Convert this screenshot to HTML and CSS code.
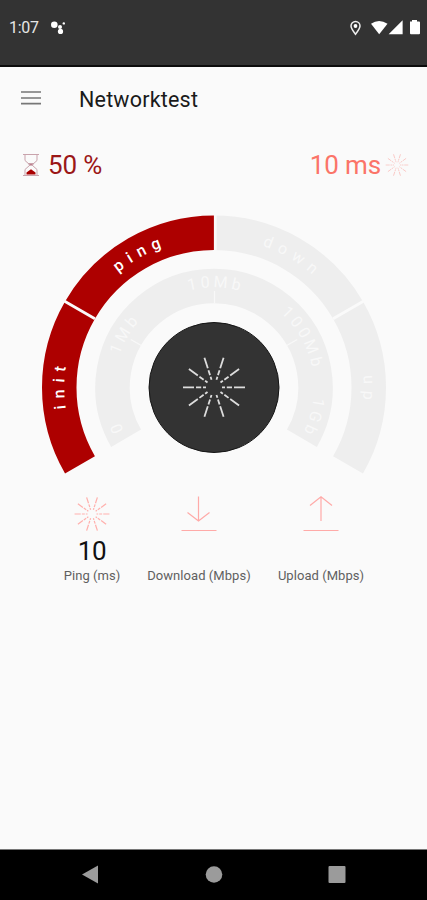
FILE: index.html
```
<!DOCTYPE html>
<html lang="en">
<head>
<meta charset="utf-8">
<title>Networktest</title>
<link rel="stylesheet" href="styles.css">
</head>
<body>
<svg class="defs" aria-hidden="true">
  <defs>
    <g id="ray"><path d="M8 0h3M12.8 0h5.2M20 0h11"/></g>
    <g id="burst">
      <use href="#ray"/>
      <use href="#ray" transform="rotate(36)"/>
      <use href="#ray" transform="rotate(72)"/>
      <use href="#ray" transform="rotate(108)"/>
      <use href="#ray" transform="rotate(144)"/>
      <use href="#ray" transform="rotate(180)"/>
      <use href="#ray" transform="rotate(216)"/>
      <use href="#ray" transform="rotate(252)"/>
      <use href="#ray" transform="rotate(288)"/>
      <use href="#ray" transform="rotate(324)"/>
    </g>
  </defs>
</svg>
<div class="screen">
  <header class="status">
    <span class="clock">1:07</span>
    <svg class="assist" width="16" height="16" viewBox="0 0 16 16"><circle cx="4.3" cy="4.7" r="3.3"/><circle cx="10" cy="7" r="2"/><circle cx="10.5" cy="11.400" r="2.6"/><circle cx="13.8" cy="3.4" r="1.2"/></svg>
    <svg class="signals" width="72" height="18" viewBox="0 0 72 18">
      <path class="pin" d="M7.5 16.2C5 13 3 10.400 3 8a4.500 4.500 0 0 1 9 0c0 2.400-2 5-4.500 8.200z"/><circle cx="7.500" cy="8" r="1.900"/>
      <path d="M23 5.800q8-5.600 16.500 0L31.200 16.200z"/>
      <path d="M54.600 2.200V16.200H40.600z"/>
      <path d="M62 3.500h2V2h5v1.500h2a1 1 0 0 1 1 1v10.700a1 1 0 0 1-1 1h-8a1 1 0 0 1-1-1z"/>
    </svg>
  </header>
  <div class="appbar">
    <svg class="menu" width="20" height="16" viewBox="0 0 20 16"><path d="M0 2h20M0 8h20M0 13.700h20"/></svg>
    <h1>Networktest</h1>
  </div>
  <div class="summary">
    <div class="progress">
      <svg class="hourglass" width="18" height="24" viewBox="0 0 18 24"><path d="M1 1.500h16M1 22.500h16M3 2v5.500L8 12l-5 4.500V22M15 2v5.500L10 12l5 4.500V22"/><path class="frame" d="M6 10.500h6L9 12.500z"/><path class="sand" d="M4.500 21.500v-2L9 16.300l4.500 3.200v2z"/></svg>
      <span>50 %</span>
    </div>
    <div class="latency">
      <span>10 ms</span>
      <svg class="burst small" width="24" height="24" viewBox="-33 -33 66 66"><use href="#burst"/></svg>
    </div>
  </div>
  <svg class="gauge" width="427" height="290" viewBox="0 0 427 290">
    <defs>
      <path id="outerText" d="M84.600 257.200A149.500 149.500 0 1 1 343.400 257.200"/>
      <path id="innerText" d="M114 182.500A100 100 0 1 1 314 182.500"/>
    </defs>
    <path class="ring done" d="M79.980 259.880A154.750 154.750 0 0 1 214 27.750"/>
    <path class="ring idle" d="M214 27.750A154.750 154.750 0 0 1 348.020 259.880"/>
    <path class="ring idle" d="M126.100 233.250A101.500 101.500 0 1 1 301.900 233.250"/>
    <path class="gap" d="M215.300 8V47M94.900 113.700L64.200 96M333.100 113.700L363.800 96"/>
    <path class="tick" d="M214.500 98.500V86M141.300 140.500L130.800 134.500M286.700 140.500L297.200 134.500"/>
    <g class="stage">
      <text transform="rotate(-88.900 214 182.500)"><textPath href="#outerText" startOffset="50%">init</textPath></text>
      <text transform="rotate(-28.900 214 182.500)"><textPath href="#outerText" startOffset="50%">ping</textPath></text>
      <text class="faint" transform="rotate(31.200 214 182.500)"><textPath href="#outerText" startOffset="50%">down</textPath></text>
      <text class="faint" transform="rotate(91.200 214 182.500)"><textPath href="#outerText" startOffset="50%">up</textPath></text>
    </g>
    <g class="scale">
      <text transform="rotate(-112 214 182.500)"><textPath href="#innerText" startOffset="50%">0</textPath></text>
      <text transform="rotate(-59 214 182.500)"><textPath href="#innerText" startOffset="50%">1Mb</textPath></text>
      <text transform="rotate(1 214 182.500)"><textPath href="#innerText" startOffset="50%">10Mb</textPath></text>
      <text transform="rotate(61 214 182.500)"><textPath href="#innerText" startOffset="50%">100Mb</textPath></text>
      <text transform="rotate(107 214 182.500)"><textPath href="#innerText" startOffset="50%">1Gb</textPath></text>
    </g>
    <circle class="hub" cx="214" cy="182.500" r="65"/>
    <use class="hub-rays" href="#burst" transform="translate(214 182.300)"/>
  </svg>
  <div class="metrics">
    <div class="metric ping">
      <svg class="burst" width="36" height="36" viewBox="-32 -32 64 64"><use href="#burst"/></svg>
      <span class="value">10</span>
      <span class="label">Ping (ms)</span>
    </div>
    <div class="metric down">
      <svg class="arrow" width="36" height="36" viewBox="0 0 36 36"><path d="M17.500 0.500V25M6.500 16.500l11 8.500 11-8.500M.5 34.500h35"/></svg>
      <span class="value"></span>
      <span class="label">Download (Mbps)</span>
    </div>
    <div class="metric up">
      <svg class="arrow" width="36" height="36" viewBox="0 0 36 36"><path d="M18 25V.8M7 9.500L18 .8l11 8.700M.5 34.500h35"/></svg>
      <span class="value"></span>
      <span class="label">Upload (Mbps)</span>
    </div>
  </div>
  <nav class="navbar">
    <svg width="18" height="20" viewBox="0 0 18 20"><path d="M0 9.500L16 .5v18z"/></svg>
    <svg width="18" height="20" viewBox="0 0 18 20"><circle cx="9" cy="9.500" r="8.300"/></svg>
    <svg width="18" height="20" viewBox="0 0 18 20"><rect x=".5" y="1" width="17" height="17" rx="1"/></svg>
  </nav>
</div>
</body>
</html>
```
FILE: styles.css
```
* { box-sizing: border-box; }
body { margin: 0; background: #fafafa; font-family: Roboto, sans-serif; }
svg { display: block; flex: none; }
.defs { width: 0; height: 0; overflow: hidden; position: absolute; }
.screen { display: flex; flex-direction: column; width: 427px; height: 900px; overflow: hidden; }
.status { display: flex; align-items: flex-start; height: 67px; background: #333; border-bottom: 2px solid #0c0c0c; padding: 18px 7px 0 9px; color: #e6e6e6; }
.clock { width: 30px; font-size: 16px; line-height: 20px; white-space: nowrap; letter-spacing: -.3px; }
.assist { margin: 2px 0 0 11px; fill: #fff; }
.signals { margin: 0 0 0 auto; fill: #fff; }
.signals .pin { fill: none; stroke: #eee; stroke-width: 1.5; }
.appbar { display: flex; align-items: center; height: 66px; padding-left: 21px; }
.menu { stroke: #777; stroke-width: 1.7; margin-top: -4px; }
h1 { margin: 0 0 0 38px; font-size: 21.5px; font-weight: 400; line-height: 28px; letter-spacing: .2px; color: #1a1a1a; }
.summary { display: flex; justify-content: space-between; height: 72px; padding: 17px 18px 0 22px; }
.progress, .latency { display: flex; height: 30px; align-items: center; font-size: 26px; line-height: 30px; white-space: nowrap; }
.progress { color: #9b1717; gap: 8px; letter-spacing: -.15px; }
.latency { color: #fb7468; gap: 4px; letter-spacing: -.15px; }
.hourglass { fill: none; stroke: #c9a3ac; stroke-width: 1; }
.hourglass .frame { fill: #b96c7c; }
.hourglass .sand { fill: #a90000; stroke: none; }
.burst { fill: none; stroke: #ffb0ad; stroke-width: 2.2; }
.burst.small { stroke: #f9c3bf; }
.gauge { font-size: 16px; }
.ring { fill: none; stroke-width: 34.5; }
.done { stroke: #ad0000; }
.idle { stroke: #eee; }
.gap { stroke: #fafafa; stroke-width: 2.8; }
.tick { stroke: #f8f8f8; stroke-width: 1.3; }
.gauge text { text-anchor: middle; }
.stage { fill: #fff; letter-spacing: 6.5px; font-weight: 500; }
.stage .faint { fill: #f8f8f8; font-weight: 400; }
.scale { fill: #f8f8f8; letter-spacing: 3.5px; }
.hub { fill: #333; stroke: #151515; stroke-width: 1; }
.hub-rays { stroke: #ddd; stroke-width: 1.8; fill: none; }
.metrics { display: flex; height: 354px; padding-left: 62px; }
.metric { display: flex; flex-direction: column; align-items: center; white-space: nowrap; }
.ping { width: 60px; }
.down { width: 108px; margin-left: 23px; }
.up { width: 90px; margin-left: 23px; }
.metric > svg { margin-top: 1px; }
.value { height: 30px; margin-top: 4px; font-size: 26px; line-height: 30px; letter-spacing: -.4px; color: #111; }
.label { margin-top: 1px; font-size: 13px; line-height: 18px; letter-spacing: .05px; color: #606060; }
.arrow { fill: none; stroke: #ffaaa8; stroke-width: 1.2; }
.navbar { display: flex; align-items: center; justify-content: center; gap: 105px; height: 51px; background: #000; border-top: 1px solid #777; fill: #9b9b9b; }
```
